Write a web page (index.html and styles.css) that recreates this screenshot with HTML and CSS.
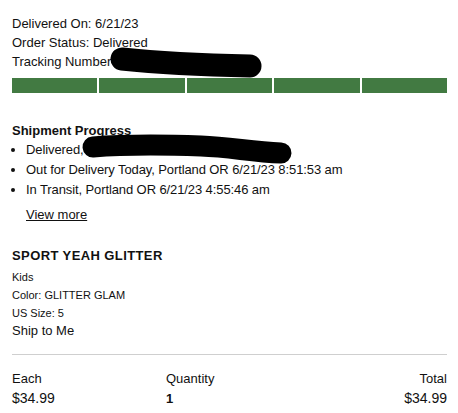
FILE: index.html
```html
<!DOCTYPE html>
<html>
<head>
<meta charset="utf-8">
<link rel="stylesheet" href="styles.css">
</head>
<body>
<div class="page">
  <section class="status">
    <div class="line">Delivered On: 6/21/23</div>
    <div class="line">Order Status: Delivered</div>
    <div class="line">Tracking Number</div>
    <div class="progress">
      <span class="seg"></span><span class="seg"></span><span class="seg"></span><span class="seg"></span><span class="seg"></span>
    </div>
    <svg class="redact redact-1" width="180" height="40" viewBox="0 0 180 40">
      <path d="M12 13 C 40 16, 90 19, 140 20" stroke="#000" stroke-width="23" stroke-linecap="round" fill="none"/>
    </svg>
  </section>

  <section class="shipment">
    <div class="ship-title">Shipment Progress</div>
    <ul class="events">
      <li>Delivered,</li>
      <li>Out for Delivery Today, Portland OR 6/21/23 8:51:53 am</li>
      <li>In Transit, Portland OR 6/21/23 4:55:46 am</li>
    </ul>
    <a class="more" href="#">View more</a>
    <svg class="redact redact-2" width="230" height="40" viewBox="0 0 230 40">
      <path d="M12 15 C 50 12, 90 13, 120 14 C 150 15, 170 20, 200 21" stroke="#000" stroke-width="21" stroke-linecap="round" fill="none"/>
    </svg>
  </section>

  <section class="product">
    <div class="name">SPORT YEAH GLITTER</div>
    <div class="meta">Kids</div>
    <div class="meta">Color: GLITTER GLAM</div>
    <div class="meta">US Size: 5</div>
    <div class="ship">Ship to Me</div>
  </section>

  <section class="totals">
    <div class="col">
      <div class="label">Each</div>
      <div class="value">$34.99</div>
    </div>
    <div class="col">
      <div class="label">Quantity</div>
      <div class="value qty">1</div>
    </div>
    <div class="col right">
      <div class="label">Total</div>
      <div class="value">$34.99</div>
    </div>
  </section>
</div>
</body>
</html>
```

FILE: styles.css
```css
html, body {
  margin: 0;
  padding: 0;
  background: #fff;
}
body {
  font-family: "Liberation Sans", Arial, sans-serif;
  font-size: 13px;
  line-height: 19px;
  color: #111;
}
.page {
  padding: 14px 11px 0 12px;
}
.status {
  position: relative;
}
.progress {
  display: flex;
  gap: 2px;
  margin-top: 7px;
  height: 15px;
}
.seg {
  flex: 1;
  background: #427a42;
}
.redact {
  position: absolute;
  display: block;
}
.redact-1 {
  left: 98px;
  top: 32px;
}
.shipment {
  position: relative;
  margin-top: 28px;
}
.ship-title {
  font-weight: bold;
}
.events {
  margin: 0;
  padding: 0 0 0 14px;
  list-style: disc;
}
.events li {
  line-height: 20px;
  letter-spacing: -0.1px;
}
.more {
  display: inline-block;
  margin: 5px 0 0 14px;
  color: #111;
  text-decoration: underline;
}
.redact-2 {
  left: 69px;
  top: 11px;
}
.product {
  margin-top: 22px;
}
.name {
  font-weight: bold;
  letter-spacing: 0.4px;
}
.meta {
  font-size: 11px;
  line-height: 18px;
}
.product .name + .meta {
  margin-top: 3px;
}
.ship {
  margin-top: -1px;
}
.totals {
  margin-top: 14px;
  border-top: 1px solid #cfcfcf;
  padding-top: 14px;
  display: grid;
  grid-template-columns: 154px 1fr 1fr;
}
.col.right {
  text-align: right;
}
.value {
  margin-top: 1px;
  font-size: 14px;
}
.qty {
  font-weight: bold;
  font-size: 13px;
}
```
